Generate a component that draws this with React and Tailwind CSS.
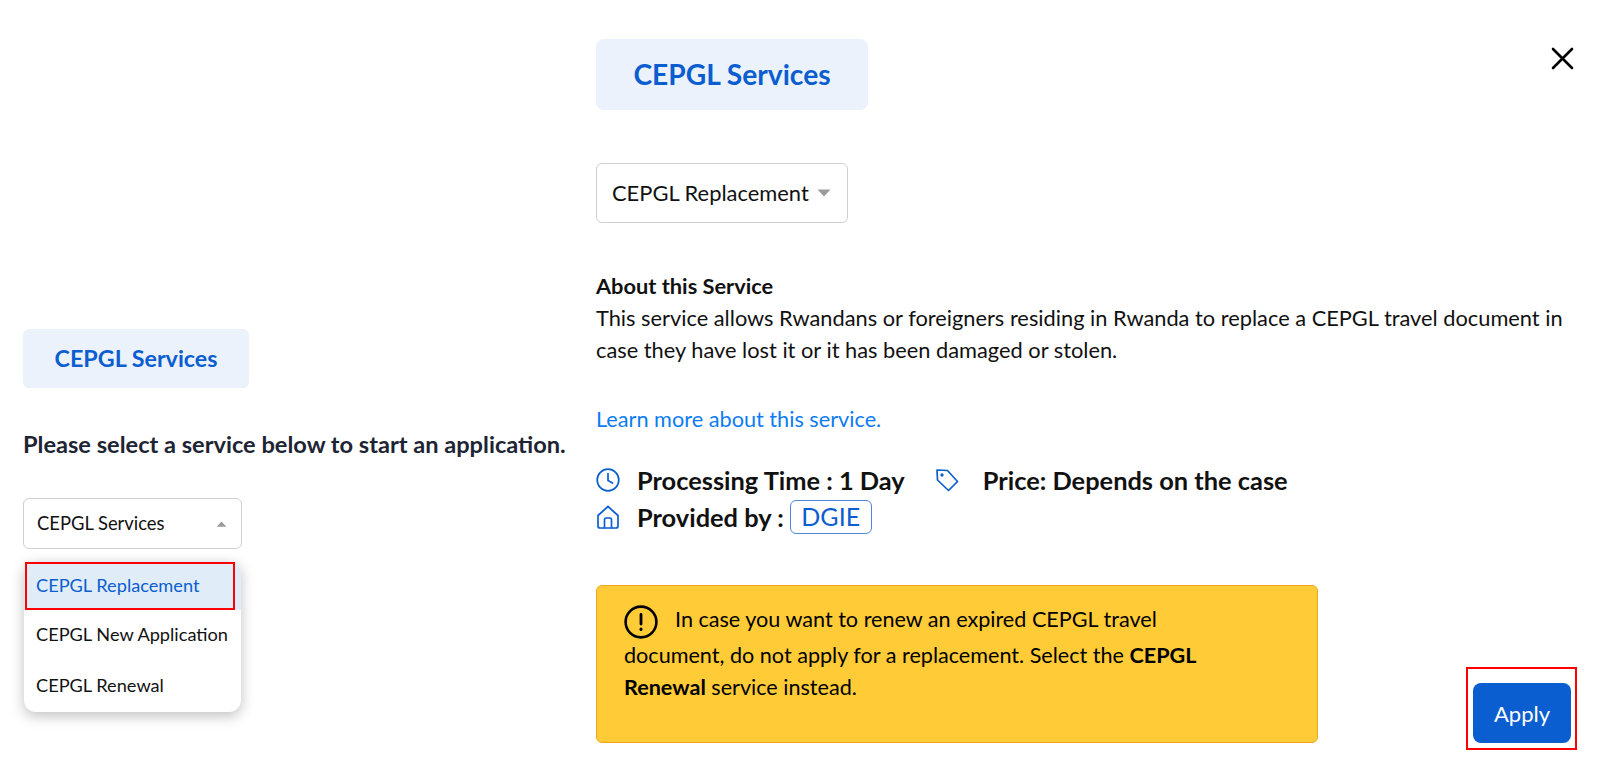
function Caret({ up, className }) {
    return (
        <svg viewBox="0 0 14 8" className={`shrink-0 ${className}`}>
            <path d={up ? "M7 0.5 L13.5 7.5 H0.5 Z" : "M0.5 0.5 H13.5 L7 7.5 Z"} fill="#9b9b9b" />
        </svg>
    );
}

function ClockIcon() {
    return (
        <svg width="24" height="24" viewBox="0 0 24 24" fill="none" stroke="#0b5ed0" strokeWidth="1.7" strokeLinecap="round" strokeLinejoin="round" className="shrink-0">
            <circle cx="12" cy="12" r="10.8" />
            <path d="M12 5.5 V12.5 L16.5 15" />
        </svg>
    );
}

function TagIcon() {
    return (
        <svg width="24" height="24" viewBox="0 0 24 24" fill="none" stroke="#0b5ed0" strokeWidth="1.7" strokeLinecap="round" strokeLinejoin="round" className="shrink-0">
            <path d="M2 2 L12.5 2.5 L22.5 13.5 L13.5 22.5 L2.5 12 Z" />
            <circle cx="7" cy="7" r="0.8" />
        </svg>
    );
}

function HomeIcon() {
    return (
        <svg width="24" height="24" viewBox="0 0 24 24" fill="none" stroke="#0b5ed0" strokeWidth="1.7" strokeLinecap="round" strokeLinejoin="round" className="shrink-0">
            <path d="M12 1.5 L2 10.5 V21 Q2 23 4 23 H20 Q22 23 22 21 V10.5 Z" />
            <path d="M8.5 23 V14.5 Q8.5 13 10 13 H14 Q15.5 13 15.5 14.5 V23" />
        </svg>
    );
}

function WarningIcon() {
    return (
        <svg width="34" height="34" viewBox="0 0 34 34" fill="none" stroke="#000" strokeLinecap="round" className="mr-[17px] inline-block align-middle">
            <circle cx="17" cy="17" r="15.4" strokeWidth="2.6" />
            <path d="M17 9.5 V19" strokeWidth="2.8" />
            <path d="M17 24 V24.4" strokeWidth="3" />
        </svg>
    );
}

export default function App() {
    return (
        <div className="relative flex h-[772px] w-[1600px] overflow-hidden bg-white font-['Lato','Noto_Sans',sans-serif] text-[#111]">
            <button className="absolute left-[1551px] top-[47px]">
                <svg width="23" height="23" viewBox="0 0 23 23" stroke="#000" strokeWidth="2.6" strokeLinecap="round">
                    <path d="M2 2 L21 21 M21 2 L2 21" />
                </svg>
            </button>

            <div className="w-[596px] shrink-0 pl-[23px] pt-[329px]">
                <div className="flex h-[59px] w-[226px] items-center justify-center rounded-md bg-[#ebf2fc] text-[23.3px] font-bold text-[#0b5ed0]">
                    CEPGL Services
                </div>

                <h2 className="mt-[41px] whitespace-nowrap text-[23.6px] leading-[30px] font-bold text-[#1d2433]">
                    Please select a service below to start an application.
                </h2>

                <div className="mt-[39px] flex h-[51px] w-[219px] items-center justify-between rounded-md border border-[#d0d0d0] pl-[13px] pr-[14px] text-[18.4px]">
                    <span>CEPGL Services</span>
                    <Caret up className="h-[6px] w-[11px]" />
                </div>

                <div className="relative ml-[1px] mt-[12px] w-[217px] rounded-xl bg-white text-[18.2px] shadow-[0_4px_14px_rgba(0,0,0,0.25)]">
                    <div className="flex h-[49px] items-center rounded-t-xl bg-[#e1ecf9] pl-[12px] text-[#0b5ed0]">
                        CEPGL Replacement
                    </div>
                    <div className="flex h-[50px] items-center whitespace-nowrap pl-[12px]">CEPGL New Application</div>
                    <div className="flex h-[52px] items-center pl-[12px]">CEPGL Renewal</div>
                    <div className="absolute left-[1px] top-[1px] h-[48px] w-[210px] border-[2px] border-[#ff0000]"></div>
                </div>
            </div>

            <div className="flex-1 pt-[39px]">
                <div className="flex h-[71px] w-[272px] items-center justify-center rounded-lg bg-[#ebf2fc] text-[28.2px] font-bold text-[#0b5ed0]">
                    CEPGL Services
                </div>

                <div className="mt-[53px] flex h-[60px] w-[252px] items-center justify-between rounded-md border border-[#cfcfcf] pl-[15px] pr-[16px] text-[21.9px]">
                    <span className="whitespace-nowrap">CEPGL Replacement</span>
                    <Caret className="h-[8px] w-[14px]" />
                </div>

                <div className="mt-[47px] text-[21.8px] leading-[32px]">
                    <div className="font-bold">About this Service</div>
                    <p className="w-[985px]">
                        This service allows Rwandans or foreigners residing in Rwanda to replace a CEPGL travel document in case they have lost it or it has been damaged or stolen.
                    </p>
                </div>

                <a className="mt-[37px] block text-[21.7px] leading-[32px] text-[#0d7cf2]">Learn more about this service.</a>

                <div className="mt-[26px] flex h-[38px] items-center whitespace-nowrap text-[25.4px] font-bold">
                    <ClockIcon />
                    <span className="ml-[17px]">Processing Time : 1 Day</span>
                    <span className="ml-[30px]"><TagIcon /></span>
                    <span className="ml-[24px]">Price: Depends on the case</span>
                </div>
                <div className="flex h-[36px] items-center whitespace-nowrap text-[25.4px] font-bold">
                    <HomeIcon />
                    <span className="ml-[17px]">Provided by :</span>
                    <span className="ml-[6px] flex h-[34px] w-[82px] items-center justify-center rounded-md border border-[#4f86dc] text-[25px] font-normal text-[#0b5ed0]">DGIE</span>
                </div>

                <div className="mt-[50px] flex items-end justify-between">
                    <div className="h-[158px] w-[722px] rounded-md border border-[#eda621] bg-[#ffcb37] pl-[27px] pt-[17px] text-[21.6px] leading-[32px] text-black">
                        <p className="w-[590px]">
                            <WarningIcon />
                            In case you want to renew an expired CEPGL travel document, do not apply for a replacement. Select the <b>CEPGL Renewal</b> service instead.
                        </p>
                    </div>
                    <div className="relative mr-[29px]">
                        <button className="flex h-[60px] w-[98px] items-center justify-center rounded-lg bg-[#0b5ed0] text-[22px] text-white">Apply</button>
                        <div className="absolute -left-[7px] -top-[16px] h-[83px] w-[111px] border-[2px] border-[#ff0000]"></div>
                    </div>
                </div>
            </div>
        </div>
    );
}
